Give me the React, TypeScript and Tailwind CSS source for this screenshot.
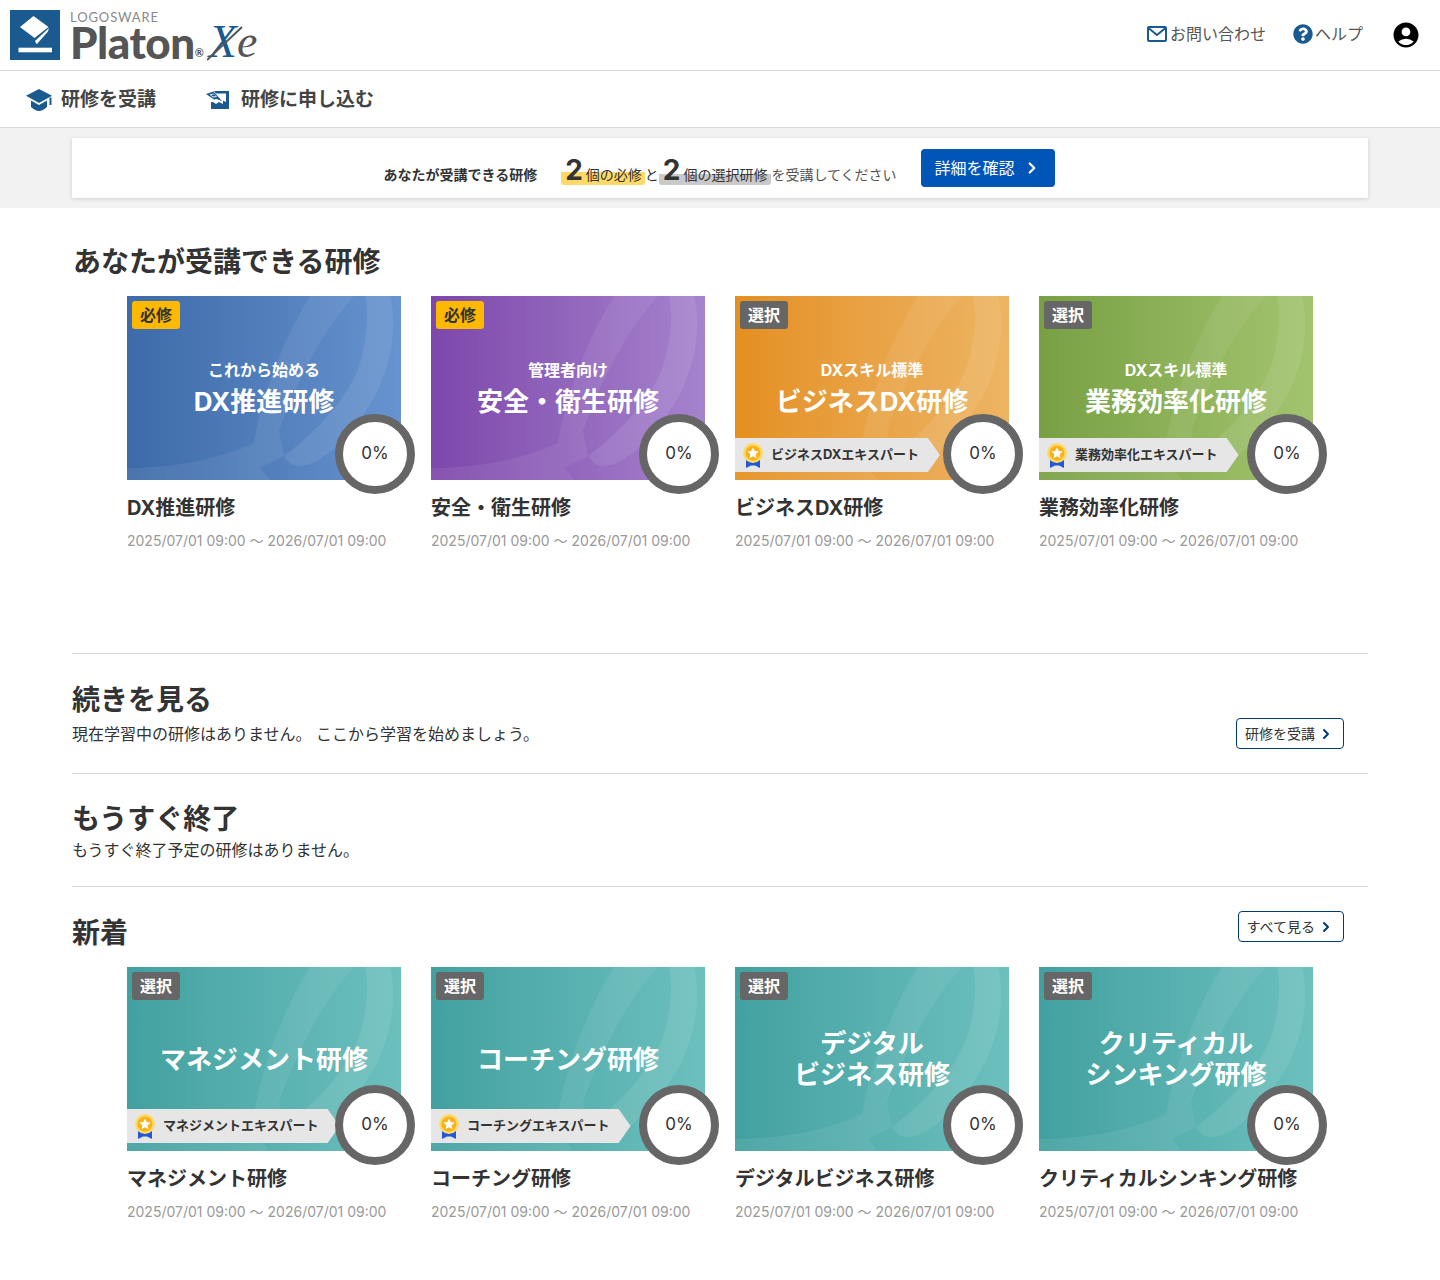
import { FaQuestionCircle } from "react-icons/fa";
import { MdAccountCircle } from "react-icons/md";
import { LuChevronRight } from "react-icons/lu";

type Course = {
  badge: "必修" | "選択";
  sub?: string;
  lines: string[];
  expert?: string;
  name: string;
  bg: string;
};

const DATE = "2025/07/01 09:00 〜 2026/07/01 09:00";
const TEAL = "bg-gradient-to-r from-[#42a1a0] to-[#6cc0be]";

const available: Course[] = [
  { badge: "必修", sub: "これから始める", lines: ["DX推進研修"], name: "DX推進研修", bg: "bg-gradient-to-r from-[#3d6aa8] to-[#6793d0]" },
  { badge: "必修", sub: "管理者向け", lines: ["安全・衛生研修"], name: "安全・衛生研修", bg: "bg-gradient-to-r from-[#7d47ab] to-[#a683cd]" },
  { badge: "選択", sub: "DXスキル標準", lines: ["ビジネスDX研修"], expert: "ビジネスDXエキスパート", name: "ビジネスDX研修", bg: "bg-gradient-to-r from-[#e4901e] to-[#edb462]" },
  { badge: "選択", sub: "DXスキル標準", lines: ["業務効率化研修"], expert: "業務効率化エキスパート", name: "業務効率化研修", bg: "bg-gradient-to-r from-[#78a043] to-[#a3c46f]" },
];

const fresh: Course[] = [
  { badge: "選択", lines: ["マネジメント研修"], expert: "マネジメントエキスパート", name: "マネジメント研修", bg: TEAL },
  { badge: "選択", lines: ["コーチング研修"], expert: "コーチングエキスパート", name: "コーチング研修", bg: TEAL },
  { badge: "選択", lines: ["デジタル", "ビジネス研修"], name: "デジタルビジネス研修", bg: TEAL },
  { badge: "選択", lines: ["クリティカル", "シンキング研修"], name: "クリティカルシンキング研修", bg: TEAL },
];

function Swoosh() {
  return (
    <svg viewBox="0 0 274 184" className="absolute inset-0 h-full w-full" fill="#ffffff" aria-hidden="true">
      <path
        fillOpacity="0.07"
        d="M183 0C155 45 135 100 127 147C95 162 50 172 0 172V184H143L133 172L157 160L152 135C170 85 195 35 227 0Z"
      />
      <path
        fillOpacity="0.09"
        d="M238 0H263C272 35 262 85 235 120C215 150 190 170 172 170C165 170 160 165 157 160C190 135 225 100 235 60C240 35 242 20 238 0Z"
      />
    </svg>
  );
}

function Medal() {
  return (
    <svg viewBox="0 0 20 25" className="h-[25px] w-[20px] shrink-0" aria-hidden="true">
      <path d="M3 17h5l2 3 2-3h5v8l-5-2.5h-4L3 25z" fill="#2457d6" />
      <circle cx="10" cy="10" r="10" fill="#fcd96b" />
      <circle cx="10" cy="10" r="7.5" fill="#fbb117" />
      <path d="M10 4.5l1.7 3.6 3.9.5-2.9 2.7.8 3.9-3.5-2-3.5 2 .8-3.9-2.9-2.7 3.9-.5z" fill="#ffffff" />
    </svg>
  );
}

function CourseCard({ course }: { course: Course }) {
  return (
    <div className="w-[274px]">
      <div className={`relative h-[184px] w-[274px] ${course.bg}`}>
        <Swoosh />
        <span
          className={`absolute left-[5px] top-[5px] flex h-[28px] w-[48px] items-center justify-center rounded-[3px] text-[16px] font-bold ${
            course.badge === "必修" ? "bg-[#fdb900] text-[#333333]" : "bg-[#666666] text-white"
          }`}
        >
          {course.badge}
        </span>
        <div className="relative flex h-full flex-col items-center justify-center pt-[0px] text-center text-white">
          {course.sub && <div className="mb-[5px] text-[16px] font-bold leading-[22px]">{course.sub}</div>}
          {course.lines.map((line) => (
            <div key={line} className="text-[26px] font-bold leading-[31px]">
              {line}
            </div>
          ))}
        </div>
        {course.expert && (
          <div className="absolute bottom-[8px] left-0 flex h-[34px] items-center gap-[8px] bg-[#e6e6e6] pl-[8px] pr-[21px] text-[13px] font-bold text-[#333333] [clip-path:polygon(0_0,calc(100%-12px)_0,100%_50%,calc(100%-12px)_100%,0_100%)]">
            <Medal />
            {course.expert}
          </div>
        )}
        <div className="absolute -bottom-[14px] -right-[14px] flex h-[80px] w-[80px] items-center justify-center rounded-full border-[8px] border-[#666666] bg-white text-[17px] text-[#333333]">
          0%
        </div>
      </div>
      <div className="mt-[14px] text-[20px] font-bold leading-[28px] text-[#333333]">{course.name}</div>
      <div className="mt-[9px] whitespace-nowrap text-[14px] leading-[20px] text-[#999999]">{DATE}</div>
    </div>
  );
}

function CourseGrid({ courses }: { courses: Course[] }) {
  return (
    <div className="flex gap-[30px] pl-[55px]">
      {courses.map((c) => (
        <CourseCard key={c.name} course={c} />
      ))}
    </div>
  );
}

function OutlineButton({ label }: { label: string }) {
  return (
    <button className="flex h-[31px] items-center gap-[3px] rounded-[4px] border border-[#003a75] bg-white pl-[8px] pr-[9px] text-[14px] text-[#333333]">
      {label}
      <LuChevronRight className="h-[16px] w-[16px] text-[#003a75]" strokeWidth={3} />
    </button>
  );
}

function Logo() {
  return (
    <div className="flex items-center gap-[10px]">
      <svg viewBox="0 0 50 50" className="h-[50px] w-[50px]" role="img" aria-label="Platon">
        <rect width="50" height="50" fill="#1a5a8f" />
        <path d="M10 17L23.5 6l15 11-14 11z" fill="#ffffff" />
        <path d="M39 18l-1.2 3.7L26.7 34.3 25 31z" fill="#ffffff" />
        <rect x="8.5" y="37.7" width="33.5" height="4.6" fill="#ffffff" />
      </svg>
      <div className="relative flex w-[190px] flex-col font-['Lato',sans-serif] text-[#555555]">
        <span className="mt-[1px] text-[13px] leading-[13px] tracking-[0.9px] text-[#888888]">LOGOSWARE</span>
        <div className="flex items-end">
          <span className="text-[44px] font-black leading-[36px] tracking-[-0.5px]">Platon</span>
          <span className="mb-[2px] text-[11px] font-bold leading-[10px]">®</span>
          <span className="ml-[5px] font-['Liberation_Serif',serif] text-[46px] italic leading-[36px] text-[#555555]">
            <span className="text-[#1a5a8f]">X</span>e
          </span>
        </div>
        <svg viewBox="0 0 40 36" className="absolute left-[137px] top-[15px] h-[36px] w-[40px]" fill="none" aria-hidden="true">
          <path d="M0 35L35 2" stroke="#555555" strokeWidth="2" />
        </svg>
      </div>
    </div>
  );
}

function CapIcon() {
  return (
    <svg viewBox="0 0 26 22" className="h-[22px] w-[26px]" fill="#1a5a8f" aria-hidden="true">
      <path d="M13 0L26 6.7 13 14 0 6.7z" />
      <path d="M5 11.5l8 4.5 8-4.5v6.4C18 20.7 15.5 22 13 22s-5-1.3-8-4.1z" />
      <rect x="23.5" y="8.5" width="2" height="7.5" />
    </svg>
  );
}

function ApplyIcon() {
  return (
    <svg viewBox="0 0 24 20" className="h-[20px] w-[24px]" fill="#1a5a8f" aria-hidden="true">
      <path d="M8 1h15v18H5v-7h2l3 2 3-2 4 2-.2-3.5L20 12V3.5H10z" />
      <path d="M0 4l7.5-2.5L16 11l-5.5-2L8 9.500z" />
      <path d="M3.500 4.500l4-1 3.500 3.500-4 .500z" fill="#ffffff" />
      <path d="M5 5l3-.8 2 2-3 .4z" fill="#1a5a8f" />
    </svg>
  );
}

function MailIcon() {
  return (
    <svg viewBox="0 0 20 16" className="h-[16px] w-[20px]" fill="none" stroke="#1a5a8f" strokeWidth="2" aria-hidden="true">
      <rect x="1" y="1" width="18" height="14" rx="1" />
      <path d="M1.500 2l8.500 7 8.500-7" />
    </svg>
  );
}

export default function App() {
  return (
    <div className="min-h-[1280px] bg-white font-['Inter','Noto_Sans_CJK_JP',sans-serif] text-[#333333]">
      <header className="flex h-[71px] items-center justify-between border-b border-[#d9d9d9] pl-[10px] pr-[19px]">
        <Logo />
        <div className="flex items-center text-[16px] text-[#555555]">
          <div className="-mt-[2px] flex items-center gap-[3px]">
            <MailIcon />
            お問い合わせ
          </div>
          <div className="-mt-[2px] ml-[27px] flex items-center gap-[2px]">
            <FaQuestionCircle className="h-[20px] w-[20px] text-[#1a5a8f]" />
            ヘルプ
          </div>
          <MdAccountCircle className="ml-[28px] h-[30px] w-[30px] text-black" />
        </div>
      </header>

      <nav className="flex h-[57px] items-center border-b border-[#d9d9d9] pl-[26px] pt-[2px] text-[19px] font-bold text-[#444444]">
        <div className="flex items-center gap-[9px]">
          <CapIcon />
          研修を受講
        </div>
        <div className="ml-[50px] flex items-center gap-[11px]">
          <ApplyIcon />
          研修に申し込む
        </div>
      </nav>

      <div className="bg-[#f2f2f2] px-[72px] pb-[10px] pt-[10px]">
        <div className="flex h-[60px] items-center justify-center gap-[24px] bg-white pr-[2px] shadow-[0_1px_4px_rgba(0,0,0,0.15)]">
          <div className="flex items-baseline pt-[9px] text-[14px] text-[#333333]">
            <span className="mr-[24px] font-bold">あなたが受講できる研修</span>
            <span className="rounded-[3px] bg-[linear-gradient(transparent_50%,#ffd966_50%)] pl-[4px] pr-[3px]">
              <span className="mr-[3px] text-[28px] font-bold leading-[20px]">2</span>個の必修
            </span>
            <span>と</span>
            <span className="rounded-[3px] bg-[linear-gradient(transparent_55%,#c9c9c9_55%)] pl-[4px] pr-[4px]">
              <span className="mr-[3px] text-[28px] font-bold leading-[20px]">2</span>個の選択研修
            </span>
            <span className="text-[#555555]">を受講してください</span>
          </div>
          <button className="flex h-[38px] w-[134px] items-center gap-[8px] rounded-[4px] bg-[#0056b8] pl-[14px] text-[16px] text-white">
            詳細を確認
            <LuChevronRight className="h-[18px] w-[18px]" strokeWidth={3} />
          </button>
        </div>
      </div>

      <main className="px-[72px]">
        <h2 className="mt-[34px] pl-[1px] text-[28px] font-bold leading-[40px]">あなたが受講できる研修</h2>
        <div className="mt-[14px]">
          <CourseGrid courses={available} />
        </div>

        <section className="mt-[102px] flex items-end justify-between border-t border-[#d9d9d9] pb-[24px] pt-[26px]">
          <div className="pb-[3px]">
            <h2 className="text-[28px] font-bold leading-[40px]">続きを見る</h2>
            <p className="mt-[2px] text-[16px] leading-[24px]">現在学習中の研修はありません。 ここから学習を始めましょう。</p>
          </div>
          <div className="mr-[24px]">
            <OutlineButton label="研修を受講" />
          </div>
        </section>

        <section className="border-t border-[#d9d9d9] pb-[24px] pt-[25px]">
          <h2 className="text-[28px] font-bold leading-[40px]">もうすぐ終了</h2>
          <p className="-mt-[1px] text-[16px] leading-[24px]">もうすぐ終了予定の研修はありません。</p>
        </section>

        <section className="flex items-start justify-between border-t border-[#d9d9d9] pt-[24px]">
          <h2 className="mt-[2px] text-[28px] font-bold leading-[40px]">新着</h2>
          <div className="mr-[24px]">
            <OutlineButton label="すべて見る" />
          </div>
        </section>
        <div className="mt-[14px] pb-[50px]">
          <CourseGrid courses={fresh} />
        </div>
      </main>
    </div>
  );
}
